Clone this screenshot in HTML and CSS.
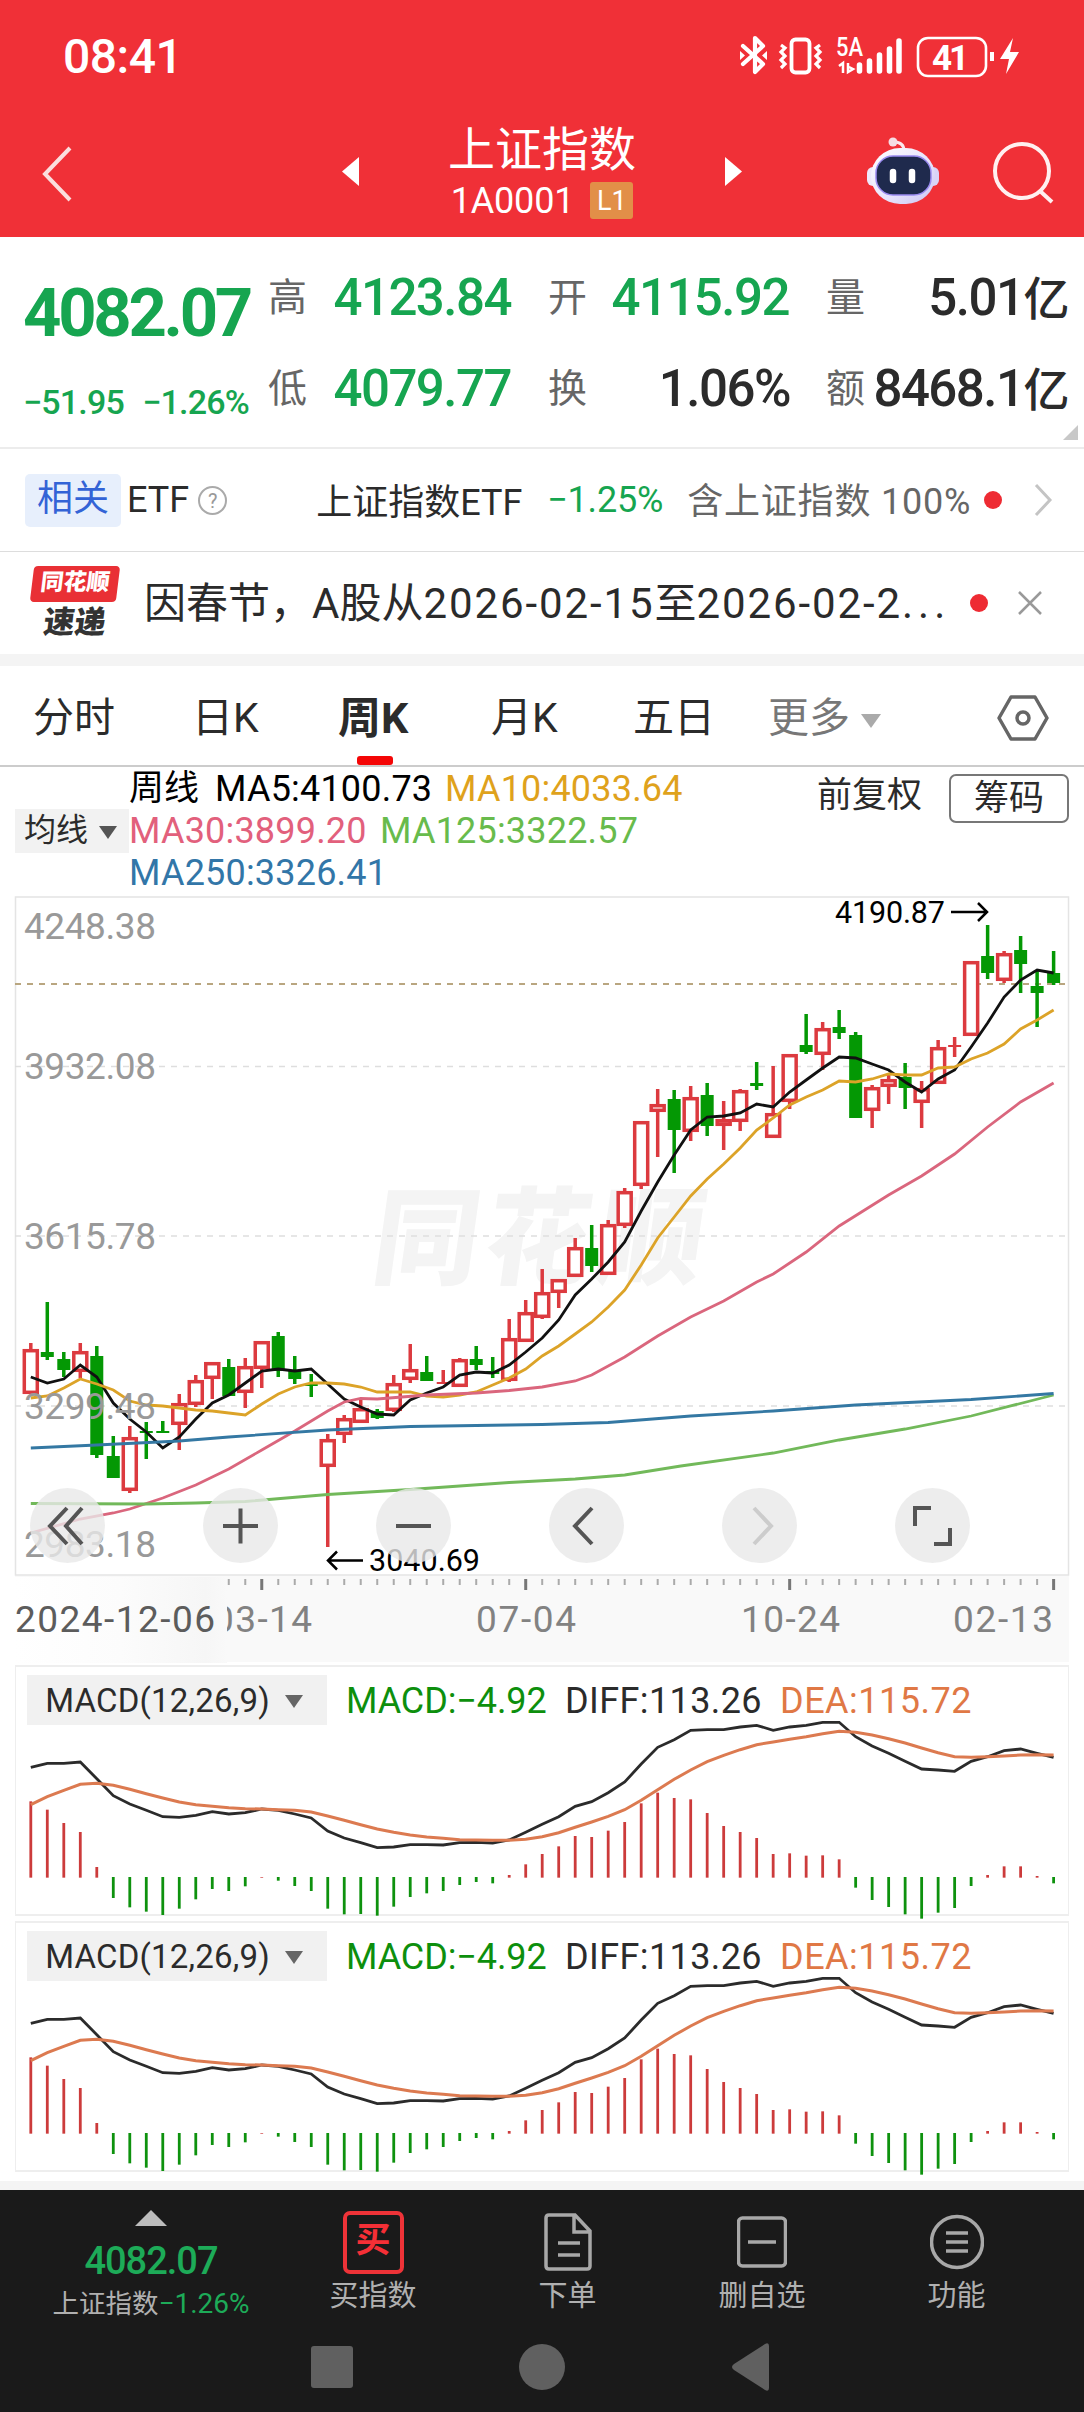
FILE: index.html
```html
<!DOCTYPE html>
<html lang="zh-CN">
   <head>
      <meta charset="UTF-8">
      <meta name="viewport" content="width=device-width, initial-scale=1">
      <title>上证指数</title>
      <link rel="stylesheet" href="styles.css">
   </head>
   <body>
      <header class="top">
         <div class="status">
            <span class="clock">08:41</span>
            <svg class="status-icons" width="282" height="44" viewBox="738 34 282 44" fill="none" stroke="#fff">
               <path d="M743 46l20 18-8 8V38l8 8-20 18" stroke-width="4.200" stroke-linejoin="round" stroke-linecap="round"/>
               <path d="M740 51l5 4.500-5 4.500zM767 51l-5 4.500 5 4.500z" fill="#fff" stroke="none"/>
               <rect x="791.500" y="39.500" width="18" height="33" rx="4" stroke-width="3.800"/>
               <path d="M781 45l4 3-4 4 4 4-4 4 4 4-4 4M820 45l-4 3 4 4-4 4 4 4-4 4 4 4" stroke-width="3.200"/>
               <text class="net" x="836" y="55.500" textLength="27" lengthAdjust="spacingAndGlyphs">5A</text>
               <path d="M839 66l4-3v10M848 63v9l5-3-4-2" stroke-width="2.500"/>
               <path d="M859.500 65v6M869.500 61v10M879.500 55v16M889.500 49v22M899 41v30" stroke-width="5.500" stroke-linecap="round"/>
               <rect x="918" y="38" width="68" height="38" rx="10" stroke-width="2.600"/>
               <path d="M992 52v9" stroke-width="4"/>
               <text class="battery" x="932" y="69.500" textLength="37">41</text>
               <path d="M1013 38l-13 21h9l-3 15 13-22h-9z" fill="#fff" stroke="none"/>
            </svg>
         </div>
         <div class="title-bar">
            <svg class="back" width="34" height="60" viewBox="0 0 34 60"><path d="M30 4L5 30l25 26" fill="none" stroke="#fbdede" stroke-width="4"/></svg>
            <svg class="prev" width="17" height="29" viewBox="0 0 17 29"><path d="M17 0v29L0 14.500z" fill="#fff"/></svg>
            <div class="title">
               <h1>上证指数</h1>
               <p>1A0001<span class="level">L1</span></p>
            </div>
            <svg class="next" width="17" height="29" viewBox="0 0 17 29"><path d="M0 0v29l17-14.500z" fill="#fff"/></svg>
            <svg class="robot" width="72" height="68" viewBox="0 0 72 68">
               <defs><linearGradient id="shell" x1="0" y1="0" x2="1" y2="1"><stop offset="0" stop-color="#fff"/><stop offset=".6" stop-color="#e6e2fb"/><stop offset="1" stop-color="#c9c3f3"/></linearGradient></defs>
               <path d="M27 5q10 0 10 9" fill="none" stroke="#fbe9ee" stroke-width="3"/>
               <circle cx="26" cy="5" r="4.500" fill="#f6dce3"/>
               <rect x="0" y="30" width="12" height="19" rx="6" fill="#eee9fb"/>
               <rect x="60" y="30" width="12" height="19" rx="6" fill="#d9d4f7"/>
               <rect x="4" y="11" width="64" height="56" rx="29" fill="url(#shell)"/>
               <rect x="9" y="19" width="55" height="39" rx="17" fill="#1f2a4d" stroke="#9a8bf0" stroke-width="1.500"/>
               <path d="M26 35v8M45 35v8" stroke="#fff" stroke-width="6.500" stroke-linecap="round"/>
            </svg>
            <svg class="search" width="64" height="64" viewBox="0 0 64 64" fill="none" stroke="#fff0f0" stroke-width="4"><circle cx="30" cy="31" r="27"/><path d="M48 51l12 11"/></svg>
         </div>
      </header>

      <section class="quote">
         <div class="quote-main">
            <div class="price">4082.07</div>
            <div class="change"><span>−51.95</span><span>−1.26%</span></div>
         </div>
         <div class="quote-grid">
            <div><label>高</label><b class="down">4123.84</b></div>
            <div><label>开</label><b class="down">4115.92</b></div>
            <div><label>量</label><b>5.01<i>亿</i></b></div>
            <div><label>低</label><b class="down">4079.77</b></div>
            <div><label>换</label><b>1.06%</b></div>
            <div><label>额</label><b>8468.1<i>亿</i></b></div>
         </div>
         <span class="expand"></span>
      </section>

      <section class="etf">
         <span class="related">相关</span>
         <span class="etf-tag">ETF</span>
         <span class="help">?</span>
         <span class="etf-name">上证指数ETF</span>
         <span class="etf-change">−1.25%</span>
         <span class="etf-hold">含上证指数 100%</span>
         <span class="dot"></span>
         <svg class="more" width="20" height="34" viewBox="0 0 20 34"><path d="M2 2l14 15L2 32" fill="none" stroke="#c4c4c4" stroke-width="3"/></svg>
      </section>

      <section class="news">
         <div class="news-logo">
            <span class="logo-top">同花顺</span>
            <span class="logo-bottom">速递</span>
         </div>
         <span class="news-text">因春节，A股从<em>2026-02-15</em>至<em>2026-02-2</em><em class="dots">...</em></span>
         <span class="dot"></span>
         <svg class="close" width="24" height="24" viewBox="0 0 24 24"><path d="M1 1l22 22M23 1L1 23" stroke="#999" stroke-width="2.500"/></svg>
      </section>

      <nav class="tabs">
         <a class="t1">分时</a>
         <a class="t2">日K</a>
         <a class="t3 active">周K</a>
         <a class="t4">月K</a>
         <a class="t5">五日</a>
         <a class="t6">更多<i class="caret"></i></a>
         <svg class="settings" width="52" height="46" viewBox="0 0 52 46" fill="none" stroke="#666" stroke-width="3.500"><path d="M14 2h24l12 21-12 21H14L2 23z" stroke-linejoin="round"/><circle cx="26" cy="23" r="6"/></svg>
      </nav>

      <section class="legend">
         <button class="ma-btn">均线<i class="caret"></i></button>
         <div class="ma">
            <div><span class="week">周线</span><span class="ma5">MA5:4100.73</span><span class="ma10">MA10:4033.64</span></div>
            <div><span class="ma30">MA30:3899.20</span><span class="ma125">MA125:3322.57</span></div>
            <div><span class="ma250">MA250:3326.41</span></div>
         </div>
         <span class="adjust">前复权</span>
         <button class="chips">筹码</button>
      </section>

      <section class="chart">
         <svg id="kline" width="1084" height="769" viewBox="0 896 1084 769">
            <defs>
               <linearGradient id="fade"><stop offset="0" stop-color="#fff"/><stop offset=".5" stop-color="#fcfcfc"/><stop offset=".9" stop-color="#f6f6f6"/><stop offset="1" stop-color="#f9f9f9"/></linearGradient>
            </defs>
            <rect x="15" y="1576" width="1054" height="86" fill="#f9f9f9"/>
            <rect x="15.500" y="897" width="1053" height="678" fill="#fff" stroke="#e4e4e4" stroke-width="1.500"/>
            <text class="watermark" transform="translate(369 1276) skewX(-8)" textLength="330">同花顺</text>
            <path class="grid" d="M15 1066.500H1069M15 1236H1069M15 1406H1069"/>
            <path class="last" d="M15 984H1069"/>
            <g id="candles"></g>
            <g id="averages"></g>
            <g class="scale">
               <text x="24" y="939" textLength="132">4248.38</text>
               <text x="24" y="1079" textLength="132">3932.08</text>
               <text x="24" y="1249" textLength="132">3615.78</text>
               <text x="24" y="1419" textLength="132">3299.48</text>
               <text x="24" y="1557" textLength="132">2983.18</text>
            </g>
            <text class="peak" x="835" y="922.500" textLength="110">4190.87</text>
            <path class="arrow" d="M951 912h36M978 903l9 9-9 9"/>
            <text class="peak" x="369" y="1571" textLength="111">3040.69</text>
            <path class="arrow" d="M363 1560.500h-35M337 1551.500l-9 9 9 9"/>
            <g id="ticks"></g>
            <g class="dates">
               <text x="213" y="1632" textLength="99">03-14</text>
               <text x="476" y="1632" textLength="100">07-04</text>
               <text x="741" y="1632" textLength="99">10-24</text>
               <text x="953" y="1632" textLength="100">02-13</text>
            </g>
            <rect x="15" y="1577" width="212" height="86" fill="url(#fade)"/>
            <text class="first-date" x="15" y="1632" textLength="200">2024-12-06</text>
         </svg>
         <div class="tools">
            <button><svg viewBox="0 0 75 75"><path d="M37 20L20 38l17 18M52 20L36 38l16 18"/></svg></button>
            <button><svg viewBox="0 0 75 75"><path d="M20 38h35M37.500 20.500v35"/></svg></button>
            <button><svg viewBox="0 0 75 75"><path d="M20 38h35"/></svg></button>
            <button><svg viewBox="0 0 75 75"><path d="M43 20L26 38l17 18"/></svg></button>
            <button class="off"><svg viewBox="0 0 75 75"><path d="M32 20l17 18-17 18"/></svg></button>
            <button><svg viewBox="0 0 75 75"><path d="M20 38V20h16M55 40v16H39"/></svg></button>
         </div>
      </section>

      <section class="macd">
         <svg class="macd-plot" width="1084" height="256" viewBox="0 1665 1084 256"></svg>
         <div class="macd-head">
            <button>MACD(12,26,9)<i class="caret"></i></button>
            <span class="m1">MACD:−4.92</span><span class="m2">DIFF:113.26</span><span class="m3">DEA:115.72</span>
         </div>
      </section>
      <section class="macd">
         <svg class="macd-plot" width="1084" height="256" viewBox="0 1665 1084 256"></svg>
         <div class="macd-head">
            <button>MACD(12,26,9)<i class="caret"></i></button>
            <span class="m1">MACD:−4.92</span><span class="m2">DIFF:113.26</span><span class="m3">DEA:115.72</span>
         </div>
      </section>
      <div class="band"></div>

      <footer>
         <div class="actions">
            <div class="index">
               <svg width="32" height="16" viewBox="0 0 32 16"><path d="M16 0l16 16H0z" fill="#bdbdbd"/></svg>
               <strong>4082.07</strong>
               <p>上证指数<em>−1.26%</em></p>
            </div>
            <div class="action">
               <span class="buy">买</span>
               <p>买指数</p>
            </div>
            <div class="action">
               <svg width="50" height="60" viewBox="0 0 50 60"><path d="M6 3h26l15 16v35q0 3-3 3H6q-3 0-3-3V6q0-3 3-3zM31 4v16h15M15 31h22M15 43h22"/></svg>
               <p>下单</p>
            </div>
            <div class="action">
               <svg width="50" height="60" viewBox="0 0 50 60"><rect x="1.500" y="6" width="47" height="48" rx="4"/><path d="M11 30h28"/></svg>
               <p>删自选</p>
            </div>
            <div class="action">
               <svg width="54" height="60" viewBox="0 0 54 60"><circle cx="27" cy="30" r="25.500"/><path d="M16 21h22M16 30h22M16 39h22"/></svg>
               <p>功能</p>
            </div>
         </div>
         <svg class="sys-nav" width="1084" height="90" viewBox="0 2322 1084 90" fill="#606060">
            <rect x="311" y="2346" width="42" height="42" rx="3"/>
            <circle cx="542" cy="2367" r="23"/>
            <path d="M734 2364l31-20q4-2 4 2v42q0 4-4 2l-31-20q-4-3 0-6z"/>
         </svg>
      </footer>
      <script src="chart.js"></script>
   </body>
</html>
```
FILE: styles.css
```css
* {
box-sizing: border-box;
}
body {
margin: 0;
width: 1084px;
background: #fff;
color: #2b2b2b;
font-family: Roboto, "Noto Sans CJK SC", sans-serif;
}
h1, p {
margin: 0;
font-weight: 400;
}
i, em {
font-style: normal;
}
svg {
display: block;
flex: none;
}
span, a, b, label {
white-space: nowrap;
}
button {
border: 0;
padding: 0;
font-family: inherit;
color: inherit;
}

/* header */
.top {
height: 237px;
background: #f03037;
color: #fff;
}
.status {
height: 110px;
display: flex;
align-items: center;
justify-content: space-between;
padding: 2px 64px 0 63px;
}
.clock {
font-size: 48px;
font-weight: 500;
letter-spacing: -.5px;
}
.net {
font-size: 25px;
font-weight: 500;
fill: #fff;
stroke: none;
}
.battery {
font-size: 35px;
font-weight: 700;
fill: #fff;
stroke: none;
}
.title-bar {
height: 127px;
display: flex;
align-items: center;
}
.back {
margin-left: 40px;
}
.prev {
margin: -5px 0 0 268px;
}
.title {
width: 366px;
text-align: center;
}
.title h1 {
font-size: 47px;
line-height: 68px;
}
.title p {
display: flex;
justify-content: center;
align-items: center;
height: 40px;
margin: -3px 0 11px;
font-size: 36px;
letter-spacing: -.2px;
}
.level {
width: 43px;
height: 37px;
margin-left: 16px;
border-radius: 3px;
background: #e28f48;
font-size: 27px;
line-height: 38px;
text-align: center;
}
.next {
margin-top: -5px;
}
.robot {
margin: -6px 0 0 125px;
}
.search {
margin: -4px 0 0 53px;
}

/* quote */
.quote {
position: relative;
display: flex;
height: 212px;
padding: 15px 0 0 23px;
border-bottom: 2px solid #ececec;
}
.quote-main {
width: 245px;
color: #16a550;
}
.price {
font-size: 67px;
font-weight: 700;
line-height: 122px;
letter-spacing: -3.3px;
}
.change {
width: 226px;
display: flex;
justify-content: space-between;
font-size: 34px;
font-weight: 500;
line-height: 56px;
letter-spacing: -.8px;
}
.quote-grid {
display: grid;
grid-template-columns: 242px 240px 240px;
column-gap: 38px;
grid-auto-rows: 91px;
}
.quote-grid div {
display: flex;
align-items: center;
justify-content: space-between;
}
.quote-grid label {
font-size: 39px;
line-height: 60px;
color: #666;
}
.quote-grid b {
margin-right: -2px;
padding-top: 1px;
font-size: 51px;
font-weight: 500;
line-height: 60px;
letter-spacing: -1.5px;
}
.quote-grid i {
font-size: 46px;
}
.quote-grid .down {
margin-right: -1px;
color: #16a550;
}
.expand {
position: absolute;
right: 6px;
bottom: 7px;
border-left: 15px solid transparent;
border-bottom: 15px solid #c8c8c8;
}

/* related ETF */
.etf {
height: 103px;
display: flex;
align-items: center;
border-bottom: 1px solid #ddd;
font-size: 36px;
}
.related {
width: 96px;
height: 53px;
margin-left: 25px;
border-radius: 5px;
background: #e7effc;
color: #3363d6;
line-height: 51px;
text-align: center;
}
.etf-tag {
margin-left: 6px;
}
.help {
width: 29px;
height: 29px;
margin-left: 9px;
border: 2px solid #aaa;
border-radius: 50%;
color: #999;
font-size: 20px;
line-height: 26px;
text-align: center;
}
.etf-name {
width: 203px;
margin: -2px 0 0 89px;
}
.etf-change {
width: 117px;
margin-left: 28px;
color: #16a550;
letter-spacing: -.2px;
}
.etf-hold {
width: 284px;
margin: -4px 0 0 23px;
color: #666;
letter-spacing: .8px;
}
.dot {
width: 18px;
height: 18px;
margin-left: 13px;
border-radius: 50%;
background: #ee2b33;
}
.more {
margin-left: 32px;
}

/* news */
.news {
height: 114px;
display: flex;
align-items: center;
border-bottom: 12px solid #f4f4f4;
font-size: 42px;
}
.news-logo {
width: 86px;
height: 74px;
margin: -1px 0 0 32px;
text-align: center;
}
.news-logo span {
display: block;
transform: skewX(-7deg);
font-weight: 900;
}
.logo-top {
height: 36px;
border-radius: 4px;
background: #e93035;
color: #fff;
font-size: 23px;
line-height: 34px;
}
.logo-bottom {
height: 38px;
font-size: 31px;
line-height: 41px;
color: #333;
}
.news-text {
width: 806px;
margin: -7px 0 0 26px;
}
.news-text em {
letter-spacing: 1.9px;
}
.news-text .dots {
letter-spacing: 5px;
}
.news .dot {
margin-left: 20px;
}
.close {
margin-left: 30px;
}

/* tabs */
.tabs {
position: relative;
height: 101px;
display: flex;
align-items: center;
border-bottom: 2px solid #ccc;
font-size: 41px;
}
.tabs a {
position: relative;
top: -2px;
}
.t1 { width: 159px; margin-left: 33px; }
.t2 { width: 146px; }
.t3 { width: 153px; }
.t4 { width: 142px; }
.t5 { width: 135px; }
.t6 { width: 229px; color: #777; }
.tabs .active {
font-size: 43px;
font-weight: 700;
}
.active::after {
content: "";
position: absolute;
left: 19px;
bottom: -20px;
width: 36px;
height: 9px;
border-radius: 3px;
background: #f40606;
}
.settings {
margin-top: 5px;
}
.caret {
display: inline-block;
border: 10px solid transparent;
border-top: 14px solid currentColor;
border-bottom: 0;
vertical-align: middle;
}
.t6 .caret {
margin-left: 11px;
color: #aaa;
}

/* moving averages */
.legend {
height: 129px;
display: flex;
font-size: 36px;
line-height: 42px;
}
.ma-btn {
width: 114px;
height: 44px;
margin: 42px 0 0 15px;
padding: 0 3px 3px 0;
background: #f2f2f2;
font-size: 32px;
line-height: 40px;
}
.ma-btn .caret {
margin-left: 11px;
border-width: 13px 9px 0;
color: #555;
}
.ma {
width: 688px;
padding-top: 1px;
}
.ma div {
display: flex;
height: 42px;
}
.week { width: 86px; color: #000; font-size: 35px; }
.ma5 { width: 230px; color: #000; letter-spacing: .2px; }
.ma10 { color: #dfa21c; letter-spacing: .2px; }
.ma30 { width: 251px; color: #e2607c; letter-spacing: .2px; }
.ma125 { color: #68bb4c; letter-spacing: .2px; }
.ma250 { color: #3276a8; letter-spacing: .2px; }
.adjust {
width: 132px;
margin-top: 8px;
font-size: 35px;
}
.chips {
width: 120px;
height: 49px;
margin-top: 7px;
border: 2px solid #777;
border-radius: 7px;
background: #fff;
font-size: 35px;
line-height: 42px;
}

/* k line */
.chart {
position: relative;
height: 769px;
}
.chart text {
font-size: 37px;
}
.chart .watermark {
font-size: 106px;
font-weight: 900;
fill: #f4f4f4;
}
.grid {
stroke: #dedede;
stroke-width: 1.5;
stroke-dasharray: 6 6;
}
.last {
stroke: #b9a680;
stroke-width: 2;
stroke-dasharray: 6 6;
}
.scale {
fill: #999;
}
.chart .peak {
font-size: 30.5px;
fill: #000;
}
.arrow {
fill: none;
stroke: #000;
stroke-width: 2.5;
}
.dates {
fill: #828282;
}
.first-date {
fill: #5c5c5c;
}
.tools {
position: absolute;
left: 30px;
top: 592px;
display: flex;
gap: 98px;
}
.tools button {
width: 75px;
height: 75px;
border-radius: 50%;
background: rgba(232, 232, 232, .8);
}
.tools path {
fill: none;
stroke: #555;
stroke-width: 4;
}
.tools .off path {
stroke: #ccc;
}

/* macd */
.macd {
position: relative;
height: 251px;
margin: 0 15px 5px;
border: 1px solid #eee;
border-width: 2px 1px;
}
.macd-plot {
position: absolute;
left: -16px;
top: -2px;
overflow: visible;
}
.macd-head {
position: relative;
display: flex;
padding: 8px 0 0 11px;
font-size: 36px;
line-height: 52px;
}
.macd-head button {
width: 300px;
height: 50px;
padding-right: 6px;
background: #f1f1f1;
font-size: 33px;
letter-spacing: .2px;
}
.macd-head .caret {
margin: -3px 0 0 15px;
border-width: 13px 9px 0;
color: #666;
}
.m1 { width: 219px; margin-left: 19px; color: #0d8f0d; letter-spacing: -.1px; }
.m2 { width: 215px; letter-spacing: .4px; }
.m3 { color: #e07845; letter-spacing: .5px; }
.band {
height: 9px;
margin-top: 9px;
background: #f4f4f4;
}

/* footer */
footer {
height: 222px;
background: #1a1a1a;
color: #b0b0b0;
}
.actions {
height: 132px;
display: grid;
grid-template-columns: 250px 194px 195px 194px 195px;
padding-left: 26px;
text-align: center;
}
.index svg {
margin: 20px auto 0;
}
.index strong {
display: block;
height: 56px;
margin-top: 7px;
color: #1dab58;
font-size: 38px;
font-weight: 500;
line-height: 56px;
letter-spacing: -1px;
}
.index p {
font-size: 26.500px;
line-height: 34px;
margin-top: -2px;
}
.index em {
color: #1dab58;
font-size: 28px;
}
.action {
padding-top: 22px;
}
.action svg {
margin: 0 auto;
fill: none;
stroke: #a8a8a8;
stroke-width: 3.5;
}
.action p {
margin-top: 4px;
font-size: 29px;
line-height: 40px;
}
.buy {
display: block;
width: 61px;
height: 63px;
margin: -1px auto -2px;
border: 4px solid #ee3338;
border-radius: 7px;
color: #f52f36;
font-size: 35px;
font-weight: 700;
line-height: 52px;
}
```
FILE: chart.js
```js
var NS = "http://www.w3.org/2000/svg";
var X0 = 30.8, STEP = 16.497;

// colour, high, body top, body bottom, low
var candles = [
["r",1343,1349,1394,1394],["g",1302,1352,1357,1360],["g",1352,1359,1370,1377],["r",1343,1351,1372,1378],["g",1346,1356,1455,1458],
["g",1436,1456,1478,1478],["r",1426,1437,1491,1493],["g",1422,1431,1433,1459],["g",1421,1431,1433,1433],["r",1394,1403,1425,1450],
["r",1375,1380,1405,1407],["r",1362,1362,1379,1399],["g",1359,1367,1396,1396],["r",1358,1366,1393,1408],["r",1341,1341,1369,1388],
["g",1332,1336,1371,1377],["g",1356,1370,1379,1384],["g",1374,1384,1386,1397],["r",1434,1439,1467,1547],["r",1415,1418,1435,1443],
["r",1400,1408,1423,1423],["g",1409,1411,1418,1419],["r",1375,1383,1411,1412],["r",1344,1369,1380,1383],["g",1356,1372,1381,1381],
["r",1370,1382,1384,1384],["r",1358,1359,1387,1387],["g",1346,1359,1365,1370],["g",1357,1371,1374,1378],["r",1319,1338,1381,1382],
["r",1300,1312,1342,1342],["r",1269,1292,1318,1319],["r",1279,1279,1293,1308],["r",1238,1247,1277,1277],["g",1225,1248,1266,1272],
["r",1220,1224,1275,1275],["r",1188,1191,1226,1228],["r",1121,1121,1186,1189],["r",1089,1104,1112,1157],["g",1090,1099,1130,1173],
["r",1086,1097,1132,1141],["g",1083,1095,1126,1136],["r",1101,1119,1126,1150],["r",1089,1090,1122,1131],["g",1062,1083,1086,1090],
["r",1066,1113,1138,1138],["r",1054,1054,1102,1109],["g",1014,1045,1052,1054],["r",1022,1028,1055,1070],["g",1010,1027,1033,1039],
["g",1032,1035,1118,1118],["r",1085,1087,1111,1128],["r",1075,1079,1087,1104],["g",1063,1077,1088,1109],["r",1081,1088,1103,1128],
["r",1040,1047,1084,1084],["r",1037,1045,1047,1057],["r",961,961,1036,1036],["g",925,956,973,979],["r",951,953,981,983],
["g",936,950,964,993],["g",970,986,993,1027],["g",951,973,983,985]
];

var ma5 = [1377,1383,1379,1365,1377,1403,1419,1432,1448,1437,1419,1403,1395,1383,1371,1369,1371,1369,1384,1399,1407,1414,1415,1400,1393,1387,1375,1372,1373,1365,1352,1338,1320,1295,1279,1262,1242,1211,1182,1155,1130,1117,1116,1113,1104,1107,1092,1080,1068,1057,1058,1064,1070,1082,1092,1079,1070,1047,1023,997,980,970,973];
var ma10 = [1398,1396,1388,1379,1384,1390,1401,1405,1406,1408,1410,1411,1413,1415,1404,1394,1387,1383,1383,1384,1387,1392,1392,1392,1396,1397,1395,1392,1385,1378,1369,1356,1346,1334,1322,1307,1290,1265,1238,1217,1196,1179,1164,1148,1130,1118,1105,1097,1090,1081,1082,1079,1074,1075,1075,1068,1067,1059,1053,1044,1029,1020,1010];
// slower averages as [week, y]
var ma30 = [[0,1533],[3,1519],[5,1513],[6,1509],[8,1498],[10,1485],[12,1469],[14,1450],[16,1431],[18,1411],[19,1402],[20,1398.5],[21,1399],[24,1395],[27,1393],[29,1390.5],[31,1387],[33,1381],[34,1375],[36,1357],[38,1336],[40,1317],[42,1301],[44,1282],[45,1274],[47,1252],[49,1226],[52,1195],[54,1176],[56,1154],[58,1127],[60,1102],[62,1083]];
var ma125 = [[0,1503.5],[7,1504],[10,1503],[13,1501.5],[18,1494.5],[23,1489.5],[29,1482.5],[33,1479],[36,1475],[39.4,1466],[45,1453],[49,1440],[53,1429],[57,1416],[62,1395]];
var ma250 = [[0,1448],[4,1445],[9,1441],[12,1437],[18,1430],[23,1426.5],[29,1425],[31,1424.5],[35,1422.5],[40,1416],[45,1411],[50,1405],[57,1399.5],[62,1393.5]];

// macd values are thirds of a pixel below y = 1640
var diff = [382,370,370,366,416,467,492,511,530,532,526,515,522,518,507,511,522,534,573,594,608,623,621,614,614,615,608,607,609,600,577,553,530,499,485,458,426,372,322,299,271,269,269,261,256,271,261,256,247,247,290,318,340,364,387,390,394,364,350,332,327,340,352];
var dea = [494,470,451,433,430,436,448,461,474,486,494,499,503,506,507,509,511,516,528,541,554,567,577,585,591,595,599,600,601,601,598,590,578,562,546,529,509,481,449,418,390,365,346,329,314,306,298,290,281,274,277,285,296,309,324,338,350,352,350,348,345,344,345];
var bars = [484,509,549,576,681,774,802,815,825,806,778,747,753,739,711,722,738,753,806,823,822,827,800,771,760,753,735,726,730,705,673,642,619,588,591,572,546,490,458,474,478,519,558,576,594,642,640,647,646,658,743,780,801,823,836,818,804,738,705,679,679,708,730];

function x(i) {
   return X0 + i * STEP;
}

function add(parent, tag, attrs) {
   var el = document.createElementNS(NS, tag);
   for (var k in attrs) el.setAttribute(k, attrs[k]);
   parent.appendChild(el);
}

function line(parent, points, color, width) {
   var d = points.map(function (p) { return x(p[0]).toFixed(1) + "," + p[1].toFixed(1); }).join(" ");
   add(parent, "polyline", { points: d, fill: "none", stroke: color, "stroke-width": width });
}

function indexed(values) {
   return values.map(function (v, i) { return [i, v]; });
}

function drawCandles() {
   var g = document.getElementById("candles");
   candles.forEach(function (c, i) {
      var cx = x(i), color = c[0] == "r" ? "#dc3a3f" : "#049804";
      var attrs = { stroke: color, "stroke-width": 3.5 };
      add(g, "path", Object.assign({ d: "M" + cx + " " + c[1] + "V" + c[2] + "M" + cx + " " + c[3] + "V" + c[4] }, attrs));
      if (c[0] == "g" || c[3] - c[2] < 4) {
         add(g, "rect", { x: cx - 6.5, y: c[2], width: 13, height: c[3] - c[2], fill: color });
      } else {
         add(g, "rect", Object.assign({ x: cx - 6.5, y: c[2] + 1.7, width: 13, height: c[3] - c[2] - 3.4, fill: "#fff" }, attrs));
      }
   });
}

function drawAverages() {
   var g = document.getElementById("averages");
   line(g, indexed(ma5), "#111", 2.8);
   line(g, indexed(ma10), "#dca328", 2.8);
   line(g, ma30, "#da667d", 2.8);
   line(g, ma125, "#72b95a", 2.8);
   line(g, ma250, "#3478a3", 2.8);
}

function drawTicks() {
   var g = document.getElementById("ticks");
   for (var i = 0; i < 63; i++) {
      var major = i % 16 == 14;
      add(g, "path", { d: "M" + x(i) + " 1579v" + (major ? 11 : 6), stroke: major ? "#777" : "#aaa", "stroke-width": major ? 3 : 2 });
   }
}

function drawMacd(svg) {
   bars.forEach(function (v, i) {
      var up = v <= 711;
      add(svg, "path", { d: "M" + x(i) + " " + (1640 + (up ? 713 : 711) / 3) + "V" + (1640 + v / 3), stroke: up ? "#cc3b3b" : "#0e920e", "stroke-width": 2.8 });
   });
   var toY = function (v) { return 1640 + v / 3; };
   line(svg, indexed(diff.map(toY)), "#2b2b2b", 2.8);
   line(svg, indexed(dea.map(toY)), "#dc7a50", 3);
}

drawCandles();
drawAverages();
drawTicks();
document.querySelectorAll(".macd-plot").forEach(drawMacd);
```
